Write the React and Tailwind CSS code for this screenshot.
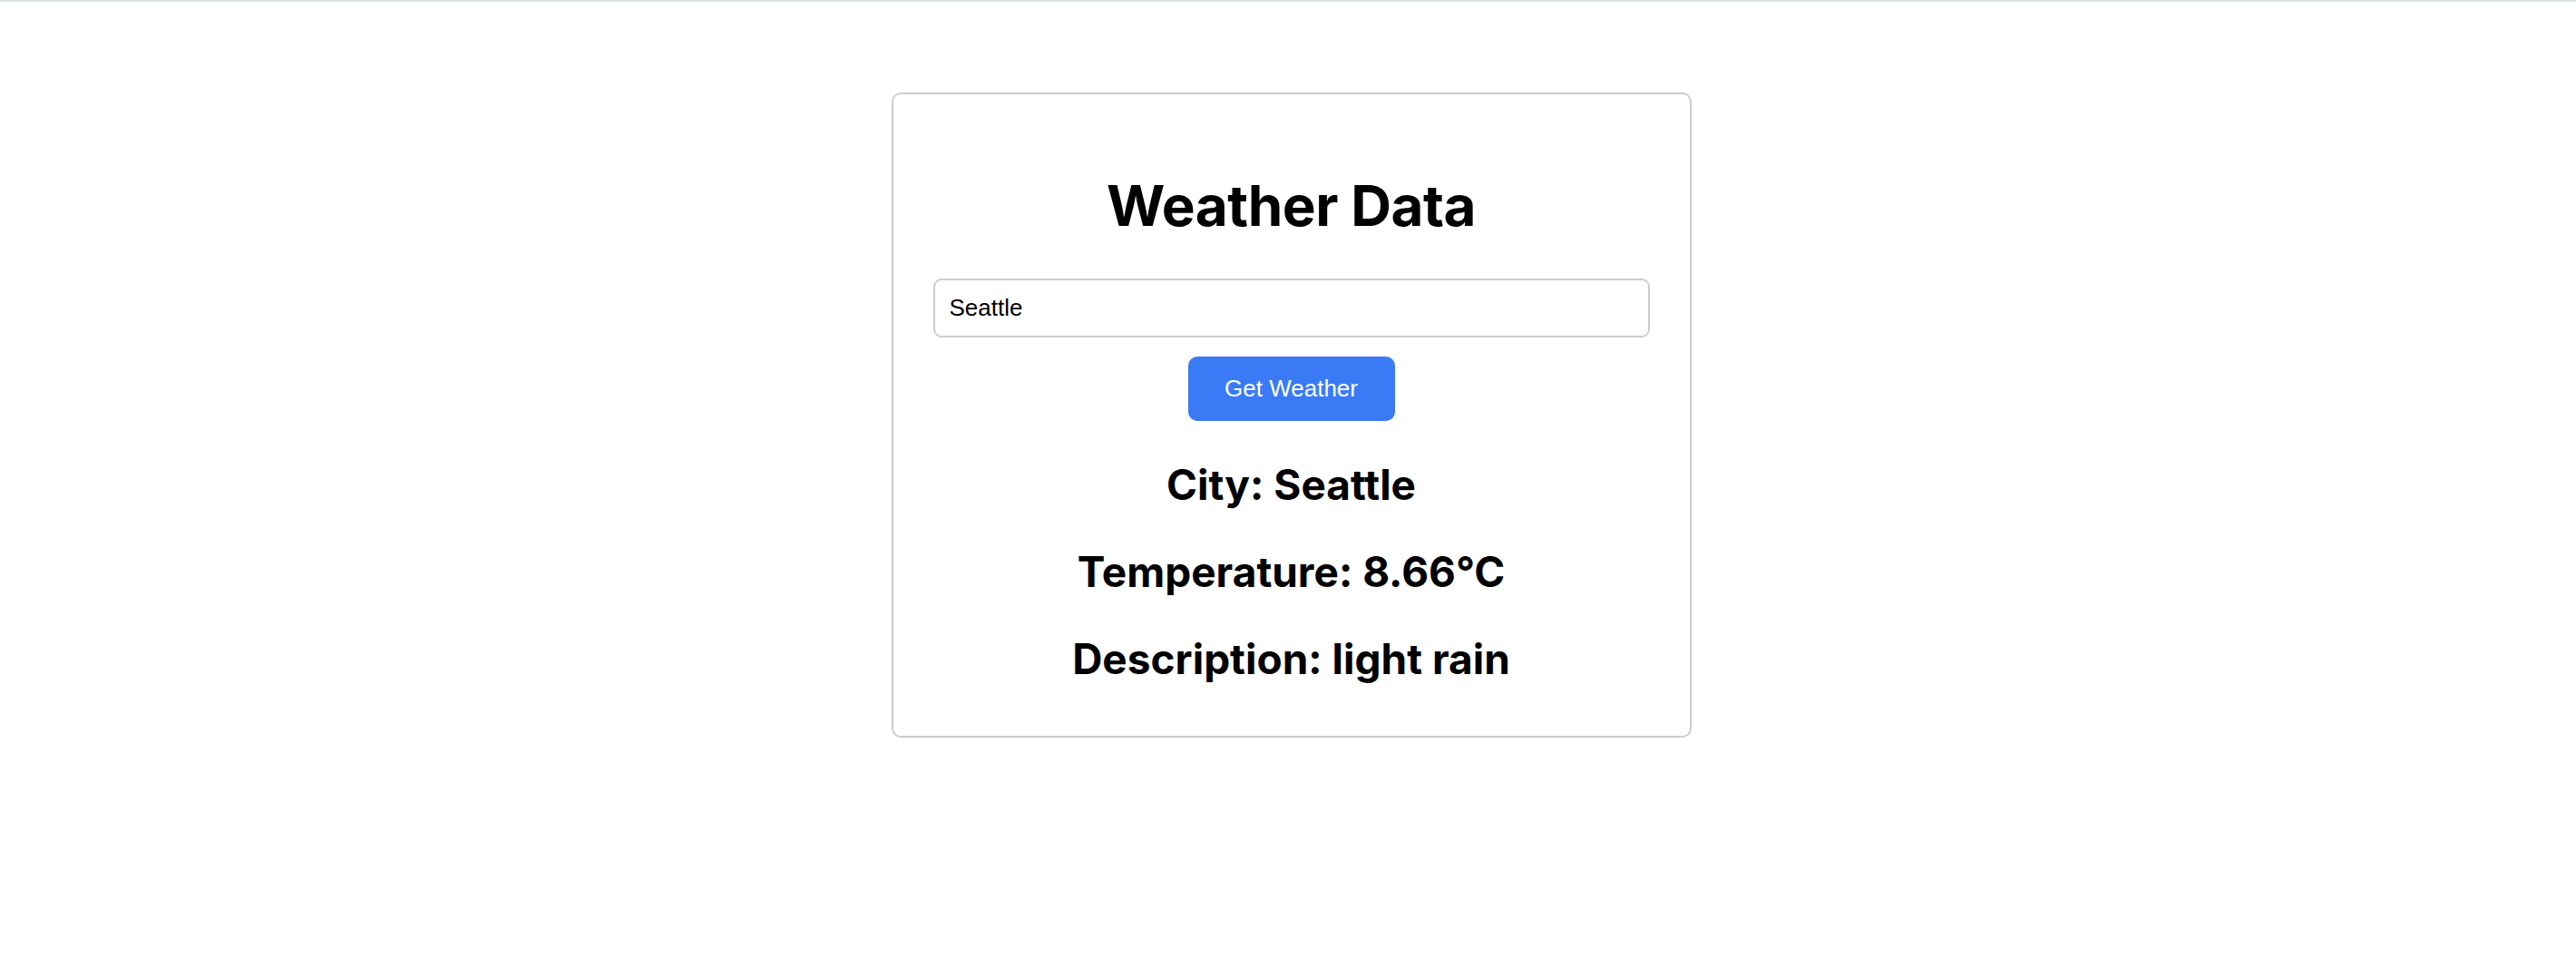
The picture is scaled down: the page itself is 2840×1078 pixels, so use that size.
import React, { useState } from 'react';

const App = () => {
    const [city, setCity] = useState('Seattle');

    const weather = {
        city: 'Seattle',
        temperature: 8.66,
        description: 'light rain',
    };

    return (
        <div className="min-h-screen bg-white border-t-2 border-[#dde3dd] pl-[7px]">
            <div className="mx-auto mt-[100px] w-[882px] border-2 border-[#cccccc] rounded-[10px] px-[44px] pt-[92px] pb-[58px] flex flex-col items-center font-['Inter',sans-serif] text-black">
                <h1 className="text-[62px] leading-[62px] font-bold tracking-[-0.5px]">Weather Data</h1>

                <input
                    type="text"
                    value={city}
                    onChange={e => setCity(e.target.value)}
                    className="mt-[49px] w-full h-[65px] border-2 border-[#cccccc] rounded-[9px] px-[16px] text-[26px] font-['Liberation_Sans',Arial,sans-serif] text-black outline-none"
                />

                <button className="mt-[21px] w-[228px] h-[71px] rounded-[10px] bg-[#3a7bf5] text-white text-[26px] font-['Liberation_Sans',Arial,sans-serif]">
                    Get Weather
                </button>

                <div className="mt-[43px] flex flex-col items-center gap-[42px]">
                    <h2 className="text-[46px] leading-[54px] font-bold">City: {weather.city}</h2>
                    <p className="text-[46px] leading-[54px] font-bold">Temperature: {weather.temperature}°C</p>
                    <p className="text-[46px] leading-[54px] font-bold">Description: {weather.description}</p>
                </div>
            </div>
        </div>
    );
};

export default App;
